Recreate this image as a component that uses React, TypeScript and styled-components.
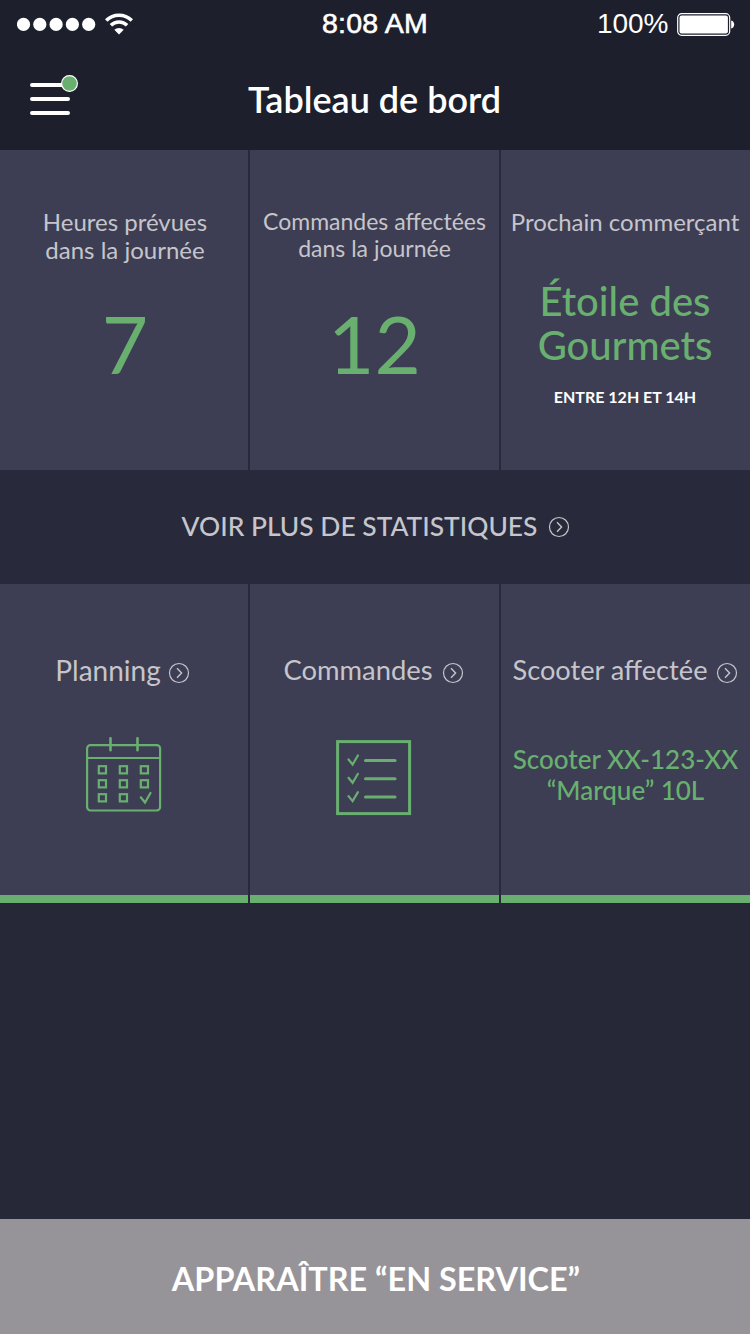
import React from "react";
import styled, { createGlobalStyle } from "styled-components";

const GREEN = "#69b070";
const PANEL = "#3d3e53";
const MUTED = "#c6c5cb";

const GlobalStyle = createGlobalStyle`
  body { margin: 0; background: #262837; }
  * { box-sizing: border-box; }
`;

const Screen = styled.div`
  display: flex;
  flex-direction: column;
  width: 750px;
  height: 1334px;
  background: #262837;
  font-family: Lato, "Liberation Sans", sans-serif;
  white-space: nowrap;
`;

const Header = styled.header`
  height: 150px;
  background: #1d202c;
  color: #fff;
`;

const StatusBar = styled.div`
  display: grid;
  grid-template-columns: 1fr auto 1fr;
  align-items: center;
  height: 48px;
  padding: 0 15px 0 17px;
  font: 28px/48px "Liberation Sans", Arial, sans-serif;
`;

const Signal = styled.div`
  display: flex;
  align-items: center;
  gap: 9px;
`;

const Clock = styled.div`
  align-self: start;
  margin-right: 2px;
  font-size: 28.5px;
  line-height: 46px;
  letter-spacing: 0.2px;
  -webkit-text-stroke: 0.6px #fff;
`;

const Battery = styled.div`
  display: flex;
  align-items: center;
  justify-content: flex-end;
  gap: 8.5px;
`;

const NavBar = styled.div`
  display: grid;
  grid-template-columns: 60px 1fr 60px;
  padding: 26px 31px 0 30px;
`;

const MenuButton = styled.button`
  display: block;
  width: 50px;
  height: 42px;
  padding: 0;
  border: 0;
  background: none;
`;

const Title = styled.h1`
  margin: 3px 0 0;
  font-size: 36px;
  font-weight: 600;
  line-height: 44px;
  text-align: center;
`;

const Columns = styled.section<{ $height: number }>`
  display: grid;
  grid-template-columns: 248px 249px 249px;
  gap: 2px;
  height: ${(p) => p.$height}px;
  background: #28293a;
`;

const Card = styled.div<{ $accent?: boolean; $inset?: string }>`
  display: flex;
  flex-direction: column;
  align-items: center;
  background: ${PANEL};
  border-bottom: ${(p) => (p.$accent ? `8px solid ${GREEN}` : "0")};
  padding: ${(p) => p.$inset ?? "0"};
  padding-top: ${(p) => (p.$accent ? 68 : 58)}px;
`;

const Label = styled.div<{ $size?: number; $line?: number }>`
  height: 56px;
  color: ${MUTED};
  font-size: ${(p) => p.$size ?? 24}px;
  line-height: ${(p) => p.$line ?? 28}px;
  text-align: center;
`;

const Figure = styled.div`
  margin-top: 31px;
  color: ${GREEN};
  font-size: 80px;
  line-height: 96px;
`;

const Merchant = styled.div`
  margin-top: 15px;
  color: ${GREEN};
  font-size: 40px;
  font-weight: 500;
  line-height: 44px;
  text-align: center;
`;

const Slot = styled.div`
  margin-top: 20px;
  color: #fff;
  font-size: 16px;
  font-weight: 700;
  line-height: 20px;
`;

const MoreLink = styled.a`
  display: flex;
  align-items: center;
  justify-content: center;
  gap: 11px;
  height: 114px;
  padding-left: 2px;
  background: #28293a;
  color: ${MUTED};
  font-size: 26.4px;
  font-weight: 500;
  line-height: 32px;
`;

const MoreText = styled.span`
  margin-bottom: 2px;
`;

const CardTitle = styled.div<{ $size?: number; $gap?: number; $trail?: number }>`
  display: flex;
  align-items: center;
  gap: ${(p) => p.$gap ?? 8}px;
  margin-right: ${(p) => p.$trail ?? 0}px;
  color: ${MUTED};
  font-size: ${(p) => p.$size ?? 28}px;
  line-height: 36px;

  svg { margin-top: 6px; }
`;

const Artwork = styled.div<{ $top: number }>`
  display: flex;
  margin-top: ${(p) => p.$top}px;
`;

const Vehicle = styled.div`
  margin-top: 56px;
  color: ${GREEN};
  font-size: 26px;
  font-weight: 500;
  line-height: 31px;
  text-align: center;
`;

const ServiceButton = styled.button`
  height: 115px;
  margin-top: auto;
  padding: 4px 0 0 2px;
  border: 0;
  background: #969499;
  color: #fff;
  font: 700 32.4px/40px Lato, sans-serif;
`;

const Chevron = () => (
  <svg width="22" height="22" viewBox="0 0 22 22" fill="none" stroke={MUTED} strokeWidth="1.2">
    <circle cx="11" cy="11" r="9.5" />
    <path d="M9 6.2 13.6 11 9 15.8" strokeWidth="1.4" />
  </svg>
);

const MenuIcon = () => (
  <svg width="50" height="42" viewBox="0 0 50 42">
    <path d="M2 11h36M2 25h36M2 39h36" stroke="#fff" strokeWidth="4" strokeLinecap="round" />
    <circle cx="39.5" cy="9.5" r="7.9" fill={GREEN} stroke="#fff" strokeWidth="1.2" />
  </svg>
);

const SignalDots = () => (
  <svg width="79" height="14" viewBox="0 0 79 14" fill="#fff">
    {[6.5, 22.8, 39.1, 55.4, 71.7].map((cx) => (
      <circle key={cx} cx={cx} cy="7.4" r="6.6" />
    ))}
  </svg>
);

const Wifi = () => (
  <svg width="28" height="22" viewBox="0 0 28 22" fill="none" stroke="#fff" strokeWidth="3.5">
    <path d="M1.2 7.4a18.3 18.3 0 0 1 25.6 0" />
    <path d="M5.9 12.2a11.6 11.6 0 0 1 16.2 0" />
    <path d="M14 21.6 9.3 16.8a6.8 6.8 0 0 1 9.4 0Z" fill="#fff" stroke="none" />
  </svg>
);

const BatteryIcon = () => (
  <svg width="58" height="23" viewBox="0 0 58 23">
    <rect x="0.7" y="0.7" width="52" height="21.6" rx="4" fill="none" stroke="#fff" strokeWidth="1.2" />
    <rect x="2.5" y="2.5" width="48.4" height="18" rx="2" fill="#fff" />
    <path d="M54.2 7.5c4 1 4 7 0 8Z" fill="#fff" />
  </svg>
);

const dayCells = [0, 1, 2].flatMap((row) =>
  [0, 1, 2].filter((col) => row < 2 || col < 2).map((col) => ({ x: 12.8 + col * 21, y: 29.2 + row * 14 })),
);

const CalendarIcon = () => (
  <svg width="76" height="76" viewBox="0 0 76 76" fill="none" stroke={GREEN} strokeWidth="2.2">
    <rect x="1.1" y="8.1" width="73" height="65.4" rx="3.5" />
    <path d="M1 21h73" />
    <path d="M24.5 1.2v12M51.5 1.2v12" strokeLinecap="round" strokeWidth="2.6" />
    {dayCells.map((c) => (
      <rect key={`${c.x}-${c.y}`} x={c.x} y={c.y} width="7.2" height="7.2" />
    ))}
    <path d="m54.8 60.3 4.2 5.2 5.5-9.5" strokeLinecap="round" />
  </svg>
);

const ChecklistIcon = () => (
  <svg width="76" height="76" viewBox="0 0 76 76" fill="none" stroke={GREEN} strokeLinecap="round">
    <rect x="1.6" y="1.6" width="72" height="72" strokeWidth="3" strokeLinecap="square" />
    {[20.5, 38.8, 57.1].map((y) => (
      <React.Fragment key={y}>
        <path d={`m12.5 ${y - 1} 4.1 5 5.3-9`} strokeWidth="2.2" />
        <path d={`M29.5 ${y}H59`} strokeWidth="3" />
      </React.Fragment>
    ))}
  </svg>
);

export default function App() {
  return (
    <Screen>
      <GlobalStyle />
      <Header>
        <StatusBar>
          <Signal>
            <SignalDots />
            <Wifi />
          </Signal>
          <Clock>8:08 AM</Clock>
          <Battery>
            100%
            <BatteryIcon />
          </Battery>
        </StatusBar>
        <NavBar>
          <MenuButton aria-label="Menu">
            <MenuIcon />
          </MenuButton>
          <Title>Tableau de bord</Title>
        </NavBar>
      </Header>
      <Columns $height={320}>
        <Card $inset="0 0 0 2px">
          <Label>
            Heures prévues
            <br />
            dans la journée
          </Label>
          <Figure>7</Figure>
        </Card>
        <Card>
          <Label $size={23} $line={27}>
            Commandes affectées
            <br />
            dans la journée
          </Label>
          <Figure>12</Figure>
        </Card>
        <Card $inset="0 1px 0 0">
          <Label>Prochain commerçant</Label>
          <Merchant>
            Étoile des
            <br />
            Gourmets
          </Merchant>
          <Slot>ENTRE 12H ET 14H</Slot>
        </Card>
      </Columns>
      <MoreLink>
        <MoreText>VOIR PLUS DE STATISTIQUES</MoreText>
        <Chevron />
      </MoreLink>
      <Columns $height={319}>
        <Card $accent>
          <CardTitle $gap={7} $trail={3}>
            Planning
            <Chevron />
          </CardTitle>
          <Artwork $top={49}>
            <CalendarIcon />
          </Artwork>
        </Card>
        <Card $accent $inset="0 2px 0 0">
          <CardTitle $size={27.4} $gap={9}>
            Commandes
            <Chevron />
          </CardTitle>
          <Artwork $top={52}>
            <ChecklistIcon />
          </Artwork>
        </Card>
        <Card $accent>
          <CardTitle $size={27.2} $trail={1}>
            Scooter affectée
            <Chevron />
          </CardTitle>
          <Vehicle>
            Scooter XX-123-XX
            <br />
            “Marque” 10L
          </Vehicle>
        </Card>
      </Columns>
      <ServiceButton>APPARAÎTRE “EN SERVICE”</ServiceButton>
    </Screen>
  );
}
